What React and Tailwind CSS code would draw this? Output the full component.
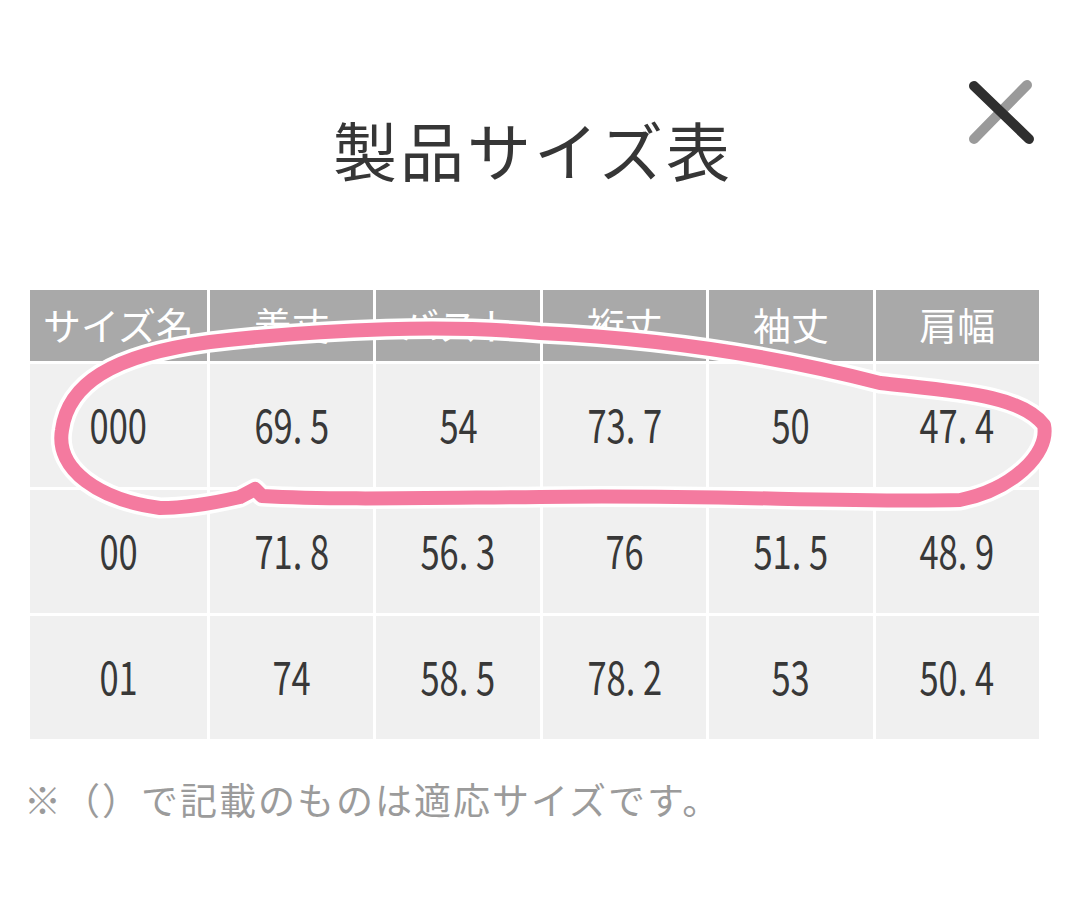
import React from "react";

const headers = ["サイズ名", "着丈", "バスト", "裄丈", "袖丈", "肩幅"];
const rows = [
  ["000", "69. 5", "54", "73. 7", "50", "47. 4"],
  ["00", "71. 8", "56. 3", "76", "51. 5", "48. 9"],
  ["01", "74", "58. 5", "78. 2", "53", "50. 4"],
];

const jp = { fontFamily: '"Noto Sans CJK JP", "Noto Sans", sans-serif' };

const loop =
  "M160 508 C100 500 55 470 62 430 C68 385 110 355 210 342 C330 328 450 325 540 333 C650 338 760 352 880 383 C960 392 1020 395 1044 425 C1050 455 1010 490 960 500 C850 503 700 494 540 497 C420 498 330 500 262 496 L255 489 L240 497 C210 504 185 508 160 508 Z";

export default function App() {
  return (
    <div className="relative w-[1080px] h-[923px] bg-white overflow-hidden" style={jp}>
      <div className="flex justify-center pt-[104px] pr-[14px]">
        <h1 className="text-[64px] leading-[88px] text-[#363636] font-normal tracking-[3px]">製品サイズ表</h1>
      </div>
      <button className="absolute left-[962px] top-[78px] w-[76px] h-[70px]" aria-label="close">
        <svg width="76" height="70" viewBox="0 0 76 70">
          <line x1="65" y1="7" x2="12" y2="61" stroke="#9a9a9a" strokeWidth="10" strokeLinecap="round" />
          <line x1="12" y1="8" x2="67" y2="61" stroke="#2f2f2f" strokeWidth="10" strokeLinecap="round" />
        </svg>
      </button>

      <div className="ml-[30px] mt-[98px] w-[1009px] grid grid-cols-[177px_repeat(5,1fr)] gap-[3px]">
        {headers.map((h) => (
          <div key={h} className="h-[71px] bg-[#a9a9a9] flex items-center justify-center pb-[4px] text-white text-[38px] font-normal whitespace-nowrap">
            {h}
          </div>
        ))}
        {rows.map((r, i) =>
          r.map((c, j) => (
            <div key={i + "-" + j} className="h-[123px] bg-[#f0f0f0] flex items-center justify-center pb-[6px]">
              <span className="inline-block text-[46px] font-normal text-[#383838] scale-x-75 whitespace-pre leading-none">{c}</span>
            </div>
          ))
        )}
      </div>

      <p className="ml-[24px] mt-[35px] text-[37px] leading-[50px] tracking-[2px] text-[#9b9b9b] whitespace-nowrap">
        ※（）で記載のものは適応サイズです。
      </p>

      <svg className="absolute inset-0 pointer-events-none" width="1080" height="923" viewBox="0 0 1080 923">
        <g fill="none" strokeLinecap="round" strokeLinejoin="round">
          <path d={loop} stroke="#ffffff" strokeWidth="21" />
          <path d={loop} stroke="#f47a9f" strokeWidth="14" />
        </g>
      </svg>
    </div>
  );
}
